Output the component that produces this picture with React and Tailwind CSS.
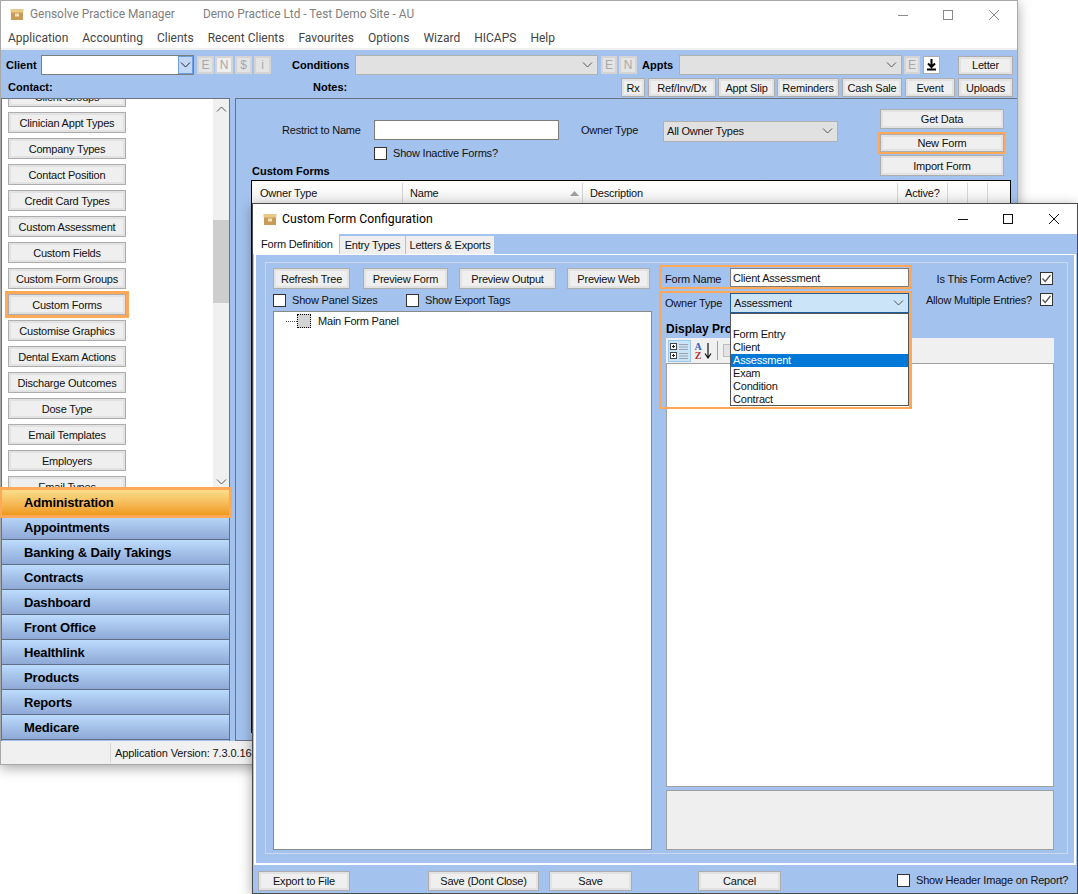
import React from 'react';

const LIST_ITEMS = [
  'Client Groups',
  'Clinician Appt Types',
  'Company Types',
  'Contact Position',
  'Credit Card Types',
  'Custom Assessment',
  'Custom Fields',
  'Custom Form Groups',
  'Custom Forms',
  'Customise Graphics',
  'Dental Exam Actions',
  'Discharge Outcomes',
  'Dose Type',
  'Email Templates',
  'Employers',
  'Email Types',
];

const NAV_ITEMS = ['Appointments', 'Banking & Daily Takings', 'Contracts', 'Dashboard', 'Front Office', 'Healthlink', 'Products', 'Reports', 'Medicare'];
const MENU_ITEMS = ['Application', 'Accounting', 'Clients', 'Recent Clients', 'Favourites', 'Options', 'Wizard', 'HICAPS', 'Help'];
const OWNER_TYPES = ['Form Entry', 'Client', 'Assessment', 'Exam', 'Condition', 'Contract'];

function Btn({ className = '', children }) {
  return (
    <div className={`flex items-center justify-center shrink-0 pt-[1px] border border-[#adadad] bg-[#efefef] shadow-[inset_0_0_0_2px_#e2e2e2] text-[11px] tracking-[-0.2px] text-[#111] whitespace-nowrap ${className}`}>
      {children}
    </div>
  );
}

function TinyBtn({ className = '', children }) {
  return (
    <div className={`flex items-center justify-center shrink-0 h-[18px] border-2 border-[#d4d4d4] bg-[#e4e4e4] text-[12px] text-[#a8a8a8] ${className}`}>
      {children}
    </div>
  );
}

function Chevron({ color = '#555', className = '' }) {
  return (
    <svg width="11" height="6" viewBox="0 0 11 6" className={className}>
      <path d="M1 0.5 L5.5 5 L10 0.5" fill="none" stroke={color} strokeWidth="1" />
    </svg>
  );
}

function Combo({ className = '', children }) {
  return (
    <div className={`flex items-center shrink-0 h-[20px] border border-[#b0b0b0] bg-[#e1e1e1] pl-[3px] pr-[3px] text-[11px] tracking-[-0.2px] text-[#111] ${className}`}>
      <span className="flex-1">{children}</span>
      <Chevron className="mr-[1px]" />
    </div>
  );
}

function Check({ checked = false, className = '' }) {
  return (
    <div className={`flex items-center justify-center shrink-0 w-[13px] h-[13px] border border-[#333] bg-white ${className}`}>
      {checked && (
        <svg width="11" height="11" viewBox="0 0 11 11">
          <path d="M1.5 5.5 L4.2 8.5 L9.5 2" fill="none" stroke="#555" strokeWidth="1.3" />
        </svg>
      )}
    </div>
  );
}

function BoxIcon({ className = '' }) {
  return (
    <svg width="14" height="13" viewBox="0 0 14 13" className={className}>
      <rect x="1" y="3" width="12" height="9" fill="#c99b56" />
      <rect x="0.5" y="1" width="13" height="3.5" fill="#e9c987" />
      <rect x="5" y="5.5" width="4" height="3" fill="#f3e2bd" />
    </svg>
  );
}

function WindowButtons({ color }) {
  return (
    <div className="flex items-center shrink-0">
      <svg width="12" height="12" viewBox="0 0 12 12">
        <path d="M1 6.5 H11" stroke={color} strokeWidth="1" />
      </svg>
      <svg width="12" height="12" viewBox="0 0 12 12" className="ml-[33px]">
        <rect x="1.5" y="1.5" width="9" height="9" fill="none" stroke={color} strokeWidth="1" />
      </svg>
      <svg width="12" height="12" viewBox="0 0 12 12" className="ml-[34px]">
        <path d="M1 1 L11 11 M11 1 L1 11" stroke={color} strokeWidth="1" />
      </svg>
    </div>
  );
}

function MainWindow() {
  return (
    <div className="absolute left-0 top-0 w-[1018px] h-[765px] flex flex-col border border-[#a8a8a8] bg-white shadow-[0_3px_12px_rgba(0,0,0,0.35)]">
      <div className="flex items-center h-[27px] shrink-0 pl-[9px] pr-[17px] font-['Roboto'] text-[11.9px] text-[#808080]">
        <BoxIcon />
        <span className="ml-[6px]">Gensolve Practice Manager</span>
        <span className="ml-[28px] flex-1">Demo Practice Ltd - Test Demo Site - AU</span>
        <WindowButtons color="#8a8a8a" />
      </div>
      <div className="flex items-center gap-[14px] h-[22px] shrink-0 pl-[7px] border-b-2 border-[#f0f0f0] font-['Roboto'] text-[12px] text-[#444]">
        {MENU_ITEMS.map(item => <span key={item}>{item}</span>)}
      </div>

      <div className="h-[48px] shrink-0 bg-[#a4c2ee] pt-[5px] text-[11px]">
        <div className="flex items-center h-[20px]">
          <span className="ml-[5px] w-[35px] font-bold text-[11px] text-black">Client</span>
          <div className="flex items-center justify-end w-[153px] h-[20px] border border-[#7d7d7d] bg-white shrink-0">
            <div className="flex items-center justify-center w-[15px] h-[18px] bg-[#c3d8f5] border border-[#6f9de0]">
              <Chevron color="#223" />
            </div>
          </div>
          <TinyBtn className="ml-[3px] w-[17px]">E</TinyBtn>
          <TinyBtn className="ml-[1px] w-[18px] bg-[#efefef] text-[#111]">N</TinyBtn>
          <TinyBtn className="ml-[2px] w-[17px]">$</TinyBtn>
          <TinyBtn className="ml-[2px] w-[17px]">i</TinyBtn>
          <span className="ml-[21px] w-[63px] font-bold text-[11px] text-black">Conditions</span>
          <Combo className="w-[243px]" />
          <TinyBtn className="ml-[3px] w-[16px]">E</TinyBtn>
          <TinyBtn className="ml-[2px] w-[18px]">N</TinyBtn>
          <span className="ml-[5px] w-[37px] font-bold text-[11px] text-black">Appts</span>
          <Combo className="w-[223px]" />
          <TinyBtn className="ml-[2px] w-[16px]">E</TinyBtn>
          <div className="flex items-center justify-center ml-[3px] w-[17px] h-[18px] shrink-0 border border-[#adadad] bg-white">
            <svg width="11" height="12" viewBox="0 0 11 12">
              <path d="M5.5 0 V7 M2 4.5 L5.5 8 L9 4.5 M1 10.5 H10" fill="none" stroke="#000" strokeWidth="2" />
            </svg>
          </div>
          <Btn className="ml-[18px] w-[55px] h-[19px]">Letter</Btn>
        </div>
        <div className="flex items-center h-[19px] mt-[3px]">
          <span className="ml-[7px] w-[305px] font-bold text-[11px] text-black">Contact:</span>
          <span className="w-[308px] font-bold text-[11px] text-black">Notes:</span>
          <Btn className="w-[24px] h-[19px]">Rx</Btn>
          <Btn className="ml-[3px] w-[68px] h-[19px]">Ref/Inv/Dx</Btn>
          <Btn className="ml-[2px] w-[57px] h-[19px]">Appt Slip</Btn>
          <Btn className="ml-[2px] w-[62px] h-[19px]">Reminders</Btn>
          <Btn className="ml-[3px] w-[60px] h-[19px]">Cash Sale</Btn>
          <Btn className="ml-[3px] w-[50px] h-[19px]">Event</Btn>
          <Btn className="ml-[3px] w-[55px] h-[19px]">Uploads</Btn>
        </div>
      </div>

      <div className="flex flex-1 min-h-0 bg-[#a4c2ee]">
        <div className="flex flex-col w-[229px] shrink-0">
          <div className="flex h-[392px] shrink-0 bg-white border border-b-0 border-[#6b7280]">
            <div className="flex-1 overflow-hidden">
              <div className="flex flex-col gap-[5px] -mt-[13px] pl-[6px]">
                {LIST_ITEMS.map(item => (
                  <Btn key={item} className={`w-[118px] h-[21px] ${item === 'Custom Forms' ? 'outline-3 outline-[#ffa858]' : ''}`}>{item}</Btn>
                ))}
              </div>
            </div>
            <div className="flex flex-col w-[16px] shrink-0 bg-[#f0f0f0]">
              <div className="flex justify-center h-[121px] pt-[7px]">
                <Chevron color="#555" className="rotate-180" />
              </div>
              <div className="h-[83px] bg-[#cdcdcd]" />
              <div className="flex flex-1 justify-center items-end pb-[5px]">
                <Chevron color="#555" />
              </div>
            </div>
          </div>
          <div className="flex flex-col flex-1 border-x border-[#6b7280] font-bold text-[13px] tracking-[-0.15px] text-black">
            <div className="relative z-10 flex items-center h-[25px] shrink-0 pl-[22px] bg-gradient-to-b from-[#fbdf8a] to-[#ee9a14] outline-3 outline-[#ffa858]">Administration</div>
            {NAV_ITEMS.map(item => (
              <div key={item} className="flex items-center h-[25px] shrink-0 pl-[22px] pt-[2px] border-b border-[#5f6e85] bg-gradient-to-b from-[#bcdcfd] to-[#8ea9d6]">{item}</div>
            ))}
          </div>
        </div>

        <div className="flex flex-col flex-1 ml-[5px] border border-r-0 border-[#6b7280] bg-[#a4c2ee] text-[11px] tracking-[-0.2px] text-[#111]">
          <div className="flex h-[81px] shrink-0">
            <div className="w-[644px] shrink-0 pt-[21px]">
              <div className="flex items-center h-[20px]">
                <span className="ml-[46px] w-[92px] pt-[1px]">Restrict to Name</span>
                <div className="w-[185px] h-[20px] border border-[#7d7d7d] bg-white" />
                <span className="ml-[22px] w-[82px] pt-[1px]">Owner Type</span>
                <Combo className="w-[175px] h-[21px] mt-[2px]">All Owner Types</Combo>
              </div>
              <div className="flex items-center h-[13px] mt-[7px] ml-[138px]">
                <Check />
                <span className="ml-[6px]">Show Inactive Forms?</span>
              </div>
              <div className="ml-[16px] mt-[3px] font-bold text-[11px] tracking-normal text-black">Custom Forms</div>
            </div>
            <div className="w-[124px] pt-[10px]">
              <Btn className="w-full h-[20px]">Get Data</Btn>
              <Btn className="w-full h-[18px] mt-[5px] outline-2 outline-[#ffa858]">New Form</Btn>
              <Btn className="w-full h-[21px] mt-[3px]">Import Form</Btn>
            </div>
          </div>
          <div className="flex-1 ml-[15px] mr-[6px] mb-[7px] border border-black bg-white">
            <div className="flex h-[22px] pt-[2px] bg-gradient-to-b from-white to-[#f2f2f2]">
              <div className="flex items-center w-[151px] pl-[8px] border-r border-[#d5d5d5]">Owner Type</div>
              <div className="flex items-center justify-between w-[180px] pl-[7px] pr-[3px] border-r border-[#d5d5d5]">
                Name
                <svg width="9" height="5" viewBox="0 0 9 5"><path d="M0 5 L4.5 0 L9 5 Z" fill="#a0a0a0" /></svg>
              </div>
              <div className="flex items-center w-[315px] pl-[7px] border-r border-[#d5d5d5]">Description</div>
              <div className="flex items-center w-[50px] pl-[7px] border-r border-[#d5d5d5]">Active?</div>
              <div className="w-[20px] border-r border-[#d5d5d5]" />
              <div className="w-[20px] border-r border-[#d5d5d5]" />
            </div>
          </div>
        </div>
      </div>

      <div className="flex items-center h-[23px] shrink-0 bg-[#f0f0f0] text-[11px] tracking-[-0.1px] text-[#111]">
        <div className="h-[20px] w-[110px] border-r border-[#d8d8d8]" />
        <span className="ml-[4px] pt-[2px]">Application Version: 7.3.0.163</span>
      </div>
    </div>
  );
}

function ConfigDialog() {
  return (
    <div className="absolute left-[252px] top-[203px] w-[826px] h-[691px] flex flex-col border border-[#4a4a4a] bg-[#a4c2ee] shadow-[0_3px_12px_rgba(0,0,0,0.35)] text-[11px] tracking-[-0.2px] text-[#111]">
      <div className="flex items-center h-[30px] shrink-0 bg-white pl-[10px] pr-[17px] text-black">
        <BoxIcon />
        <span className="ml-[5px] flex-1 font-['Roboto'] text-[12.25px] tracking-normal">Custom Form Configuration</span>
        <WindowButtons color="#111" />
      </div>

      <div className="flex items-end h-[20px] shrink-0 whitespace-nowrap">
        <div className="flex items-center w-[86px] h-[20px] pl-[8px] bg-white">Form Definition</div>
        <div className="flex items-center justify-center w-[65px] h-[18px] pt-[1px] ml-[1px] bg-[#efefef]">Entry Types</div>
        <div className="flex items-center justify-center w-[88px] h-[18px] pt-[1px] ml-[1px] bg-[#efefef]">Letters &amp; Exports</div>
      </div>

      <div className="flex flex-col h-[611px] shrink-0 mx-[1px] border-x-2 border-t border-b-2 border-white pl-[9px] pr-[6px] pt-[7px] pb-[9px]">
        <div className="flex flex-1 min-h-0 gap-[10px] border border-[#c9d8ee] pl-[7px] pr-[13px] pt-[5px] pb-[3px]">
          <div className="flex flex-col w-[379px] shrink-0">
            <div className="flex shrink-0">
              <Btn className="w-[77px] h-[21px]">Refresh Tree</Btn>
              <Btn className="ml-[13px] w-[85px] h-[21px]">Preview Form</Btn>
              <Btn className="ml-[11px] w-[97px] h-[21px]">Preview Output</Btn>
              <Btn className="ml-[11px] w-[83px] h-[21px]">Preview Web</Btn>
            </div>
            <div className="flex items-center mt-[5px] h-[13px] shrink-0">
              <Check />
              <span className="ml-[6px] w-[114px]">Show Panel Sizes</span>
              <Check />
              <span className="ml-[6px]">Show Export Tags</span>
            </div>
            <div className="flex-1 mt-[4px] border border-[#8a8a8a] bg-white">
              <div className="flex items-center pl-[12px] pt-[1px]">
                <div className="w-[11px] border-t border-dotted border-[#555]" />
                <div className="w-[14px] h-[14px] border border-dotted border-black bg-[#d4d4d4]" />
                <span className="ml-[7px]">Main Form Panel</span>
              </div>
            </div>
          </div>

          <div className="relative flex flex-col flex-1 min-w-0">
            <div className="flex items-start h-[19px] shrink-0">
              <span className="ml-[3px] mt-[4px] w-[65px] leading-[14px]">Form Name</span>
              <div className="flex items-center w-[179px] h-[19px] pl-[2px] pt-[1px] border border-[#7d7d7d] bg-white">Client Assessment</div>
              <span className="flex-1 mt-[4px] text-right pr-[8px] leading-[14px]">Is This Form Active?</span>
              <Check checked className="mt-[4px] mr-[1px]" />
            </div>
            <div className="flex items-start h-[20px] mt-[6px] shrink-0">
              <span className="ml-[3px] mt-[3px] w-[65px] leading-[14px]">Owner Type</span>
              <div className="flex items-center w-[179px] h-[20px] pl-[3px] pr-[4px] border border-[#1c5d9e] bg-[#cce4f7]">
                <span className="flex-1">Assessment</span>
                <Chevron />
              </div>
              <span className="flex-1 text-right pr-[8px] leading-[14px]">Allow Multiple Entries?</span>
              <Check checked className="mr-[1px]" />
            </div>
            <div className="ml-[4px] mt-[7px] h-[18px] shrink-0 font-bold text-[12px] tracking-normal text-black">Display Properties</div>
            <div className="flex items-center h-[25px] shrink-0 ml-[4px] bg-[#f0f0f0] pl-[2px]">
              <div className="flex items-center justify-center w-[23px] h-[22px] border border-[#99c9ef] bg-[#cce4f7]">
                <svg width="19" height="18" viewBox="0 0 19 18">
                  <rect x="0.5" y="1.5" width="6" height="6" fill="#fff" stroke="#444" />
                  <path d="M2 4.5 H5 M3.5 3 V6" stroke="#222" />
                  <rect x="0.5" y="10.5" width="6" height="6" fill="#fff" stroke="#444" />
                  <path d="M2 13.5 H5 M3.5 12 V15" stroke="#222" />
                  <path d="M9 2.5 H18 M9 5 H18 M9 7.5 H18 M9 11.5 H18 M9 14 H18 M9 16.5 H18" stroke="#9aa4b0" />
                </svg>
              </div>
              <div className="flex flex-col items-center w-[10px] ml-[2px] font-['Liberation_Serif'] font-bold text-[10px] leading-[9px]">
                <span className="text-[#2f5fc0]">A</span>
                <span className="text-[#b03030]">Z</span>
              </div>
              <svg width="8" height="16" viewBox="0 0 8 16" className="ml-[1px]">
                <path d="M4 0 V14 M1 10.5 L4 15 L7 10.5" fill="none" stroke="#111" strokeWidth="1.2" />
              </svg>
              <div className="w-[1px] h-[19px] ml-[5px] bg-[#a0a0a0]" />
              <div className="w-[12px] h-[13px] ml-[5px] border border-[#bdbdbd] bg-[#e3e3e3]" />
            </div>
            <div className="flex-1 ml-[4px] border border-[#a0a0a0] bg-white" />
            <div className="h-[60px] ml-[4px] mt-[3px] shrink-0 border border-[#a0a0a0] bg-[#efefef]" />

            <div className="absolute left-[-3px] top-[-3px] w-[253px] h-[24px] border-y-2 border-x-[3px] border-[#ffa858] pointer-events-none" />
            <div className="absolute left-[-3px] top-[23px] w-[253px] h-[118px] border-y-2 border-x-[3px] border-[#ffa858] pointer-events-none" />
            <div className="absolute left-[68px] top-[45px] w-[179px] h-[93px] border border-[#555] bg-white pt-[14px] leading-[13px]">
              {OWNER_TYPES.map(item => (
                <div key={item} className={`h-[13px] pl-[2px] ${item === 'Assessment' ? 'bg-[#0078d7] text-white' : ''}`}>{item}</div>
              ))}
            </div>
          </div>
        </div>
      </div>

      <div className="flex items-center flex-1 pl-[5px] pr-[8px] pt-[3px] whitespace-nowrap">
        <Btn className="w-[92px] h-[20px]">Export to File</Btn>
        <Btn className="ml-[78px] w-[111px] h-[20px]">Save (Dont Close)</Btn>
        <Btn className="ml-[10px] w-[83px] h-[20px]">Save</Btn>
        <Btn className="ml-[66px] w-[83px] h-[20px]">Cancel</Btn>
        <Check className="ml-[116px]" />
        <span className="ml-[6px]">Show Header Image on Report?</span>
      </div>
    </div>
  );
}

export default function App() {
  return (
    <div className="relative w-[1078px] h-[894px] overflow-hidden bg-white font-['Liberation_Sans',sans-serif]">
      <MainWindow />
      <ConfigDialog />
    </div>
  );
}
